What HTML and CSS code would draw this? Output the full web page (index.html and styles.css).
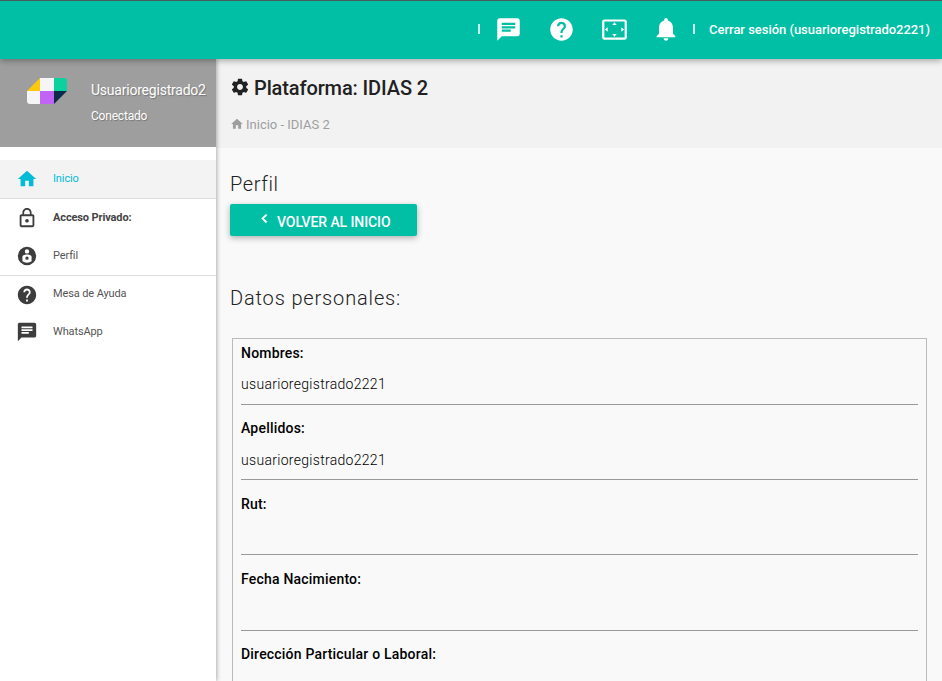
FILE: index.html
```html
<!DOCTYPE html>
<html lang="es">
<head>
<meta charset="utf-8">
<title>Perfil</title>
<link rel="stylesheet" href="styles.css">
</head>
<body>
<header class="topbar">
  <span class="sep"></span>
  <svg class="top-icon chat-ic" viewBox="0 0 24 24"><path d="M20 2H4c-1.1 0-1.99.9-1.99 2L2 22l4-4h14c1.1 0 2-.9 2-2V4c0-1.1-.9-2-2-2zM6 9h12v2H6V9zm8 5H6v-2h8v2zm4-6H6V6h12v2z"/></svg>
  <svg class="top-icon" viewBox="0 0 24 24"><path d="M12 2C6.48 2 2 6.48 2 12s4.48 10 10 10 10-4.48 10-10S17.52 2 12 2zm1 17h-2v-2h2v2zm2.07-7.75l-.9.92C13.45 12.9 13 13.5 13 15h-2v-.5c0-1.1.45-2.1 1.17-2.83l1.24-1.26c.37-.36.59-.86.59-1.41 0-1.1-.9-2-2-2s-2 .9-2 2H8c0-2.21 1.79-4 4-4s4 1.79 4 4c0 .88-.36 1.68-.93 2.25z"/></svg>
  <svg class="top-icon" viewBox="0 0 24 24"><path d="M12.01 5.5L10 8h4l-1.99-2.5zM18 10v4l2.5-1.99L18 10zM6 10l-2.5 2.01L6 14v-4zm8 6h-4l2.01 2.5L14 16zm7-13H3c-1.1 0-2 .9-2 2v14c0 1.1.9 2 2 2h18c1.1 0 2-.9 2-2V5c0-1.1-.9-2-2-2zm0 16.01H3V4.99h18v14.02z"/></svg>
  <svg class="top-icon bell-ic" viewBox="0 0 24 24"><path d="M12 22c1.1 0 2-.9 2-2h-4c0 1.1.89 2 2 2zm6-6v-5c0-3.07-1.64-5.64-4.5-6.32V4c0-.83-.67-1.5-1.5-1.5s-1.5.67-1.5 1.5v.68C7.63 5.36 6 7.92 6 11v5l-2 2v1h16v-1l-2-2z"/></svg>
  <span class="sep sep-last"></span>
  <a class="logout">Cerrar sesión (usuarioregistrado2221)</a>
</header>
<div class="shell">
  <aside class="sidebar">
    <div class="user">
      <svg class="logo" viewBox="0 0 40 26">
        <path d="M0 13 L13 0 V13 Z" fill="#ffc80a"/>
        <path d="M0 13 H13 V26 H3 Q0 26 0 23 Z" fill="#f5f5f5"/>
        <rect x="13" y="0" width="14" height="13" fill="#f5f5f5"/>
        <rect x="13" y="13" width="14" height="13" fill="#c164f5"/>
        <path d="M27 0 H37 Q40 0 40 3 V13 H27 Z" fill="#0bd19f"/>
        <path d="M27 13 H40 L27 26 Z" fill="#0c2b4a"/>
      </svg>
      <div class="user-text">
        <div class="user-name">Usuarioregistrado2</div>
        <div class="user-status">Conectado</div>
      </div>
    </div>
    <nav class="nav">
      <a class="nav-item active ruled">
        <svg class="nav-icon" viewBox="0 0 24 24"><path d="M10 20v-6h4v6h5v-8h3L12 3 2 12h3v8z"/></svg>
        <span class="nav-label">Inicio</span>
      </a>
      <a class="nav-item strong">
        <svg class="nav-icon" viewBox="0 0 24 24"><path d="M12 17c1.1 0 2-.9 2-2s-.9-2-2-2-2 .9-2 2 .9 2 2 2zm6-9h-1V6c0-2.76-2.24-5-5-5S7 3.24 7 6v2H6c-1.1 0-2 .9-2 2v10c0 1.1.9 2 2 2h12c1.1 0 2-.9 2-2V10c0-1.1-.9-2-2-2zM8.9 6c0-1.71 1.39-3.1 3.1-3.1s3.1 1.39 3.1 3.1v2H8.9V6zM18 20H6V10h12v10z"/></svg>
        <span class="nav-label">Acceso Privado:</span>
      </a>
      <a class="nav-item ruled">
        <svg class="nav-icon" viewBox="0 0 24 24"><path fill-rule="evenodd" d="M12 2a10 10 0 1 0 0 20 10 10 0 0 0 0-20zm0 2.6a2.4 2.4 0 1 1 0 4.8 2.4 2.4 0 0 1 0-4.8zM7 17.8v-5.3c0-1.2 2.8-2.2 5-2.2s5 1 5 2.2v5.3c-1.3.9-3 1.5-5 1.5s-3.7-.6-5-1.5zM12 12.6a1.8 1.8 0 1 0 0 3.6 1.8 1.8 0 0 0 0-3.6z"/></svg>
        <span class="nav-label">Perfil</span>
      </a>
      <a class="nav-item short">
        <svg class="nav-icon" viewBox="0 0 24 24"><path d="M12 2C6.48 2 2 6.48 2 12s4.48 10 10 10 10-4.48 10-10S17.52 2 12 2zm1 17h-2v-2h2v2zm2.07-7.75l-.9.92C13.45 12.9 13 13.5 13 15h-2v-.5c0-1.1.45-2.1 1.17-2.83l1.24-1.26c.37-.36.59-.86.59-1.41 0-1.1-.9-2-2-2s-2 .9-2 2H8c0-2.21 1.79-4 4-4s4 1.79 4 4c0 .88-.36 1.68-.93 2.25z"/></svg>
        <span class="nav-label">Mesa de Ayuda</span>
      </a>
      <a class="nav-item">
        <svg class="nav-icon" viewBox="0 0 24 24"><path d="M20 2H4c-1.1 0-1.99.9-1.99 2L2 22l4-4h14c1.1 0 2-.9 2-2V4c0-1.1-.9-2-2-2zM6 9h12v2H6V9zm8 5H6v-2h8v2zm4-6H6V6h12v2z"/></svg>
        <span class="nav-label">WhatsApp</span>
      </a>
    </nav>
  </aside>
  <main class="main">
    <section class="page-head">
      <h1 class="page-title">
        <svg class="gear" viewBox="0 0 24 24"><path d="M19.43 12.98c.04-.32.07-.64.07-.98s-.03-.66-.07-.98l2.11-1.65c.19-.15.24-.42.12-.64l-2-3.46c-.12-.22-.39-.3-.61-.22l-2.49 1c-.52-.4-1.08-.73-1.69-.98l-.38-2.65A.488.488 0 0 0 14 2h-4c-.25 0-.46.18-.49.42l-.38 2.65c-.61.25-1.17.59-1.69.98l-2.49-1c-.23-.09-.49 0-.61.22l-2 3.46c-.13.22-.07.49.12.64l2.11 1.65c-.04.32-.07.65-.07.98s.03.66.07.98l-2.11 1.65c-.19.15-.24.42-.12.64l2 3.46c.12.22.39.3.61.22l2.49-1c.52.4 1.08.73 1.69.98l.38 2.65c.03.24.24.42.49.42h4c.25 0 .46-.18.49-.42l.38-2.65c.61-.25 1.17-.59 1.69-.98l2.49 1c.23.09.49 0 .61-.22l2-3.46c.12-.22.07-.49-.12-.64l-2.11-1.65zM12 15.5c-1.93 0-3.5-1.57-3.5-3.5s1.57-3.5 3.5-3.5 3.5 1.57 3.5 3.5-1.57 3.5-3.5 3.5z"/></svg>
        <span>Plataforma: IDIAS 2</span>
      </h1>
      <div class="crumb">
        <svg class="crumb-icon" viewBox="0 0 24 24"><path d="M10 20v-6h4v6h5v-8h3L12 3 2 12h3v8z"/></svg>
        <span>Inicio - IDIAS 2</span>
      </div>
    </section>
    <section class="content">
      <h2 class="section-title">Perfil</h2>
      <a class="btn">
        <svg class="btn-icon" viewBox="0 0 24 24"><path d="M15.41 7.41L14 6l-6 6 6 6 1.41-1.41L10.83 12z"/></svg>
        <span>VOLVER AL INICIO</span>
      </a>
      <h2 class="section-title data-title">Datos personales:</h2>
      <div class="data-box">
        <div class="field">
          <div class="field-label">Nombres:</div>
          <div class="field-value">usuarioregistrado2221</div>
        </div>
        <div class="field">
          <div class="field-label">Apellidos:</div>
          <div class="field-value">usuarioregistrado2221</div>
        </div>
        <div class="field">
          <div class="field-label">Rut:</div>
          <div class="field-value"></div>
        </div>
        <div class="field">
          <div class="field-label">Fecha Nacimiento:</div>
          <div class="field-value"></div>
        </div>
        <div class="field">
          <div class="field-label">Dirección Particular o Laboral:</div>
          <div class="field-value"></div>
        </div>
      </div>
    </section>
  </main>
</div>
</body>
</html>
```
FILE: styles.css
```css
* { box-sizing: border-box; }
html, body { height: 100%; }
body {
  margin: 0;
  height: 681px;
  overflow: hidden;
  font-family: Roboto, "Liberation Sans", sans-serif;
  background: #f9f9f9;
  color: #212121;
}
.topbar {
  position: relative;
  z-index: 3;
  height: 59px;
  background: #00bfa5;
  border-top: 1px solid #4a5a58;
  box-shadow: 0 2px 6px rgba(0,0,0,.3);
  display: flex;
  align-items: center;
  justify-content: flex-end;
  padding: 0 12px 2px 0;
  color: #fff;
}
.sep { width: 2px; height: 10px; background: rgba(255,255,255,.8); margin-right: 15px; }
.sep-last { margin-left: 13px; margin-right: 14px; }
.top-icon { width: 27px; height: 27px; fill: #fff; margin-right: 26px; flex: none; }
.top-icon.bell-ic { width: 28px; height: 28px; margin: 0 0 0 -1.5px; }
.logout { font-size: 13px; font-weight: 500; letter-spacing: -.03px; white-space: nowrap; }
.shell { display: flex; height: 622px; }
.sidebar {
  position: relative;
  z-index: 2;
  width: 216px;
  flex: none;
  background: #fff;
  box-shadow: 1px 0 4px rgba(0,0,0,.3);
}
.user {
  height: 88px;
  background: #9e9e9e;
  display: flex;
  padding: 19px 10px 0 27px;
  color: #fff;
}
.logo { width: 40px; height: 26px; flex: none; }
.user-text { margin-left: 24px; text-shadow: 1px 1px 1px rgba(0,0,0,.25); }
.user-name { font-size: 14px; letter-spacing: -.22px; line-height: 24px; white-space: nowrap; }
.user-status { font-size: 12px; letter-spacing: -.2px; line-height: 16px; margin-top: 6px; }
.nav { padding-top: 13px; display: flex; flex-direction: column; }
.nav-item {
  height: 38px;
  display: flex;
  align-items: center;
  padding-left: 16px;
  font-size: 11px;
  letter-spacing: -.12px;
  color: #555;
}
.nav-item.ruled { height: 39px; border-bottom: 1px solid #ddd; }
.nav-item.short { height: 37px; }
.nav-item.active { background: #f3f3f3; color: #00bcd4; }
.nav-item.strong { font-weight: 700; color: #444; }
.nav-label { padding-bottom: 2px; }
.nav-icon { width: 22px; height: 22px; fill: #3d3d3d; margin-right: 15px; flex: none; }
.active .nav-icon { fill: #00bcd4; }
.main { flex: 1; min-width: 0; }
.page-head { height: 89px; background: #f2f2f2; padding: 16px 15px 0; }
.page-title {
  margin: 0;
  display: flex;
  align-items: center;
  font-size: 20px;
  letter-spacing: -.12px;
  line-height: 26px;
  font-weight: 500;
  color: #212121;
}
.gear { width: 20px; height: 20px; fill: #212121; margin: -2px 4px 0 -1px; }
.crumb { display: flex; align-items: center; margin-top: 14px; font-size: 13px; line-height: 20px; color: #9e9e9e; }
.crumb-icon { width: 14px; height: 14px; fill: #9e9e9e; margin: -2px 2px 0 -1px; }
.content { padding: 23px 15px 0 14px; }
.section-title { margin: 0; font-size: 20px; letter-spacing: .6px; line-height: 26px; font-weight: 300; color: #212121; }
.data-title { margin-top: 49px; letter-spacing: .85px; }
.btn {
  display: flex;
  align-items: center;
  width: 187px;
  height: 32px;
  margin-top: 7px;
  padding: 3px 0 0 25px;
  background: #00bfa5;
  color: #fff;
  border-radius: 2px;
  font-size: 14px;
  font-weight: 500;
  letter-spacing: -.1px;
  box-shadow: 0 2px 6px rgba(0,0,0,.3);
}
.btn-icon { width: 17px; height: 17px; fill: #fff; stroke: #fff; stroke-width: 1; margin: -7px 4px 0 1px; }
.data-box { margin: 27px 0 0 2px; width: 695px; border: 1px solid #bbb; padding: 0 8px; }
.field { height: 75.2px; border-bottom: 1px solid #999; padding-top: 15.4px; }
.field:first-child { height: 66px; padding-top: 5.9px; }
.field-label { font-size: 14px; letter-spacing: .2px; line-height: 17px; font-weight: 500; color: #000; }
.field-value { font-size: 14px; font-weight: 300; line-height: 20px; margin-top: 12.5px; letter-spacing: .3px; color: #000; }
```
